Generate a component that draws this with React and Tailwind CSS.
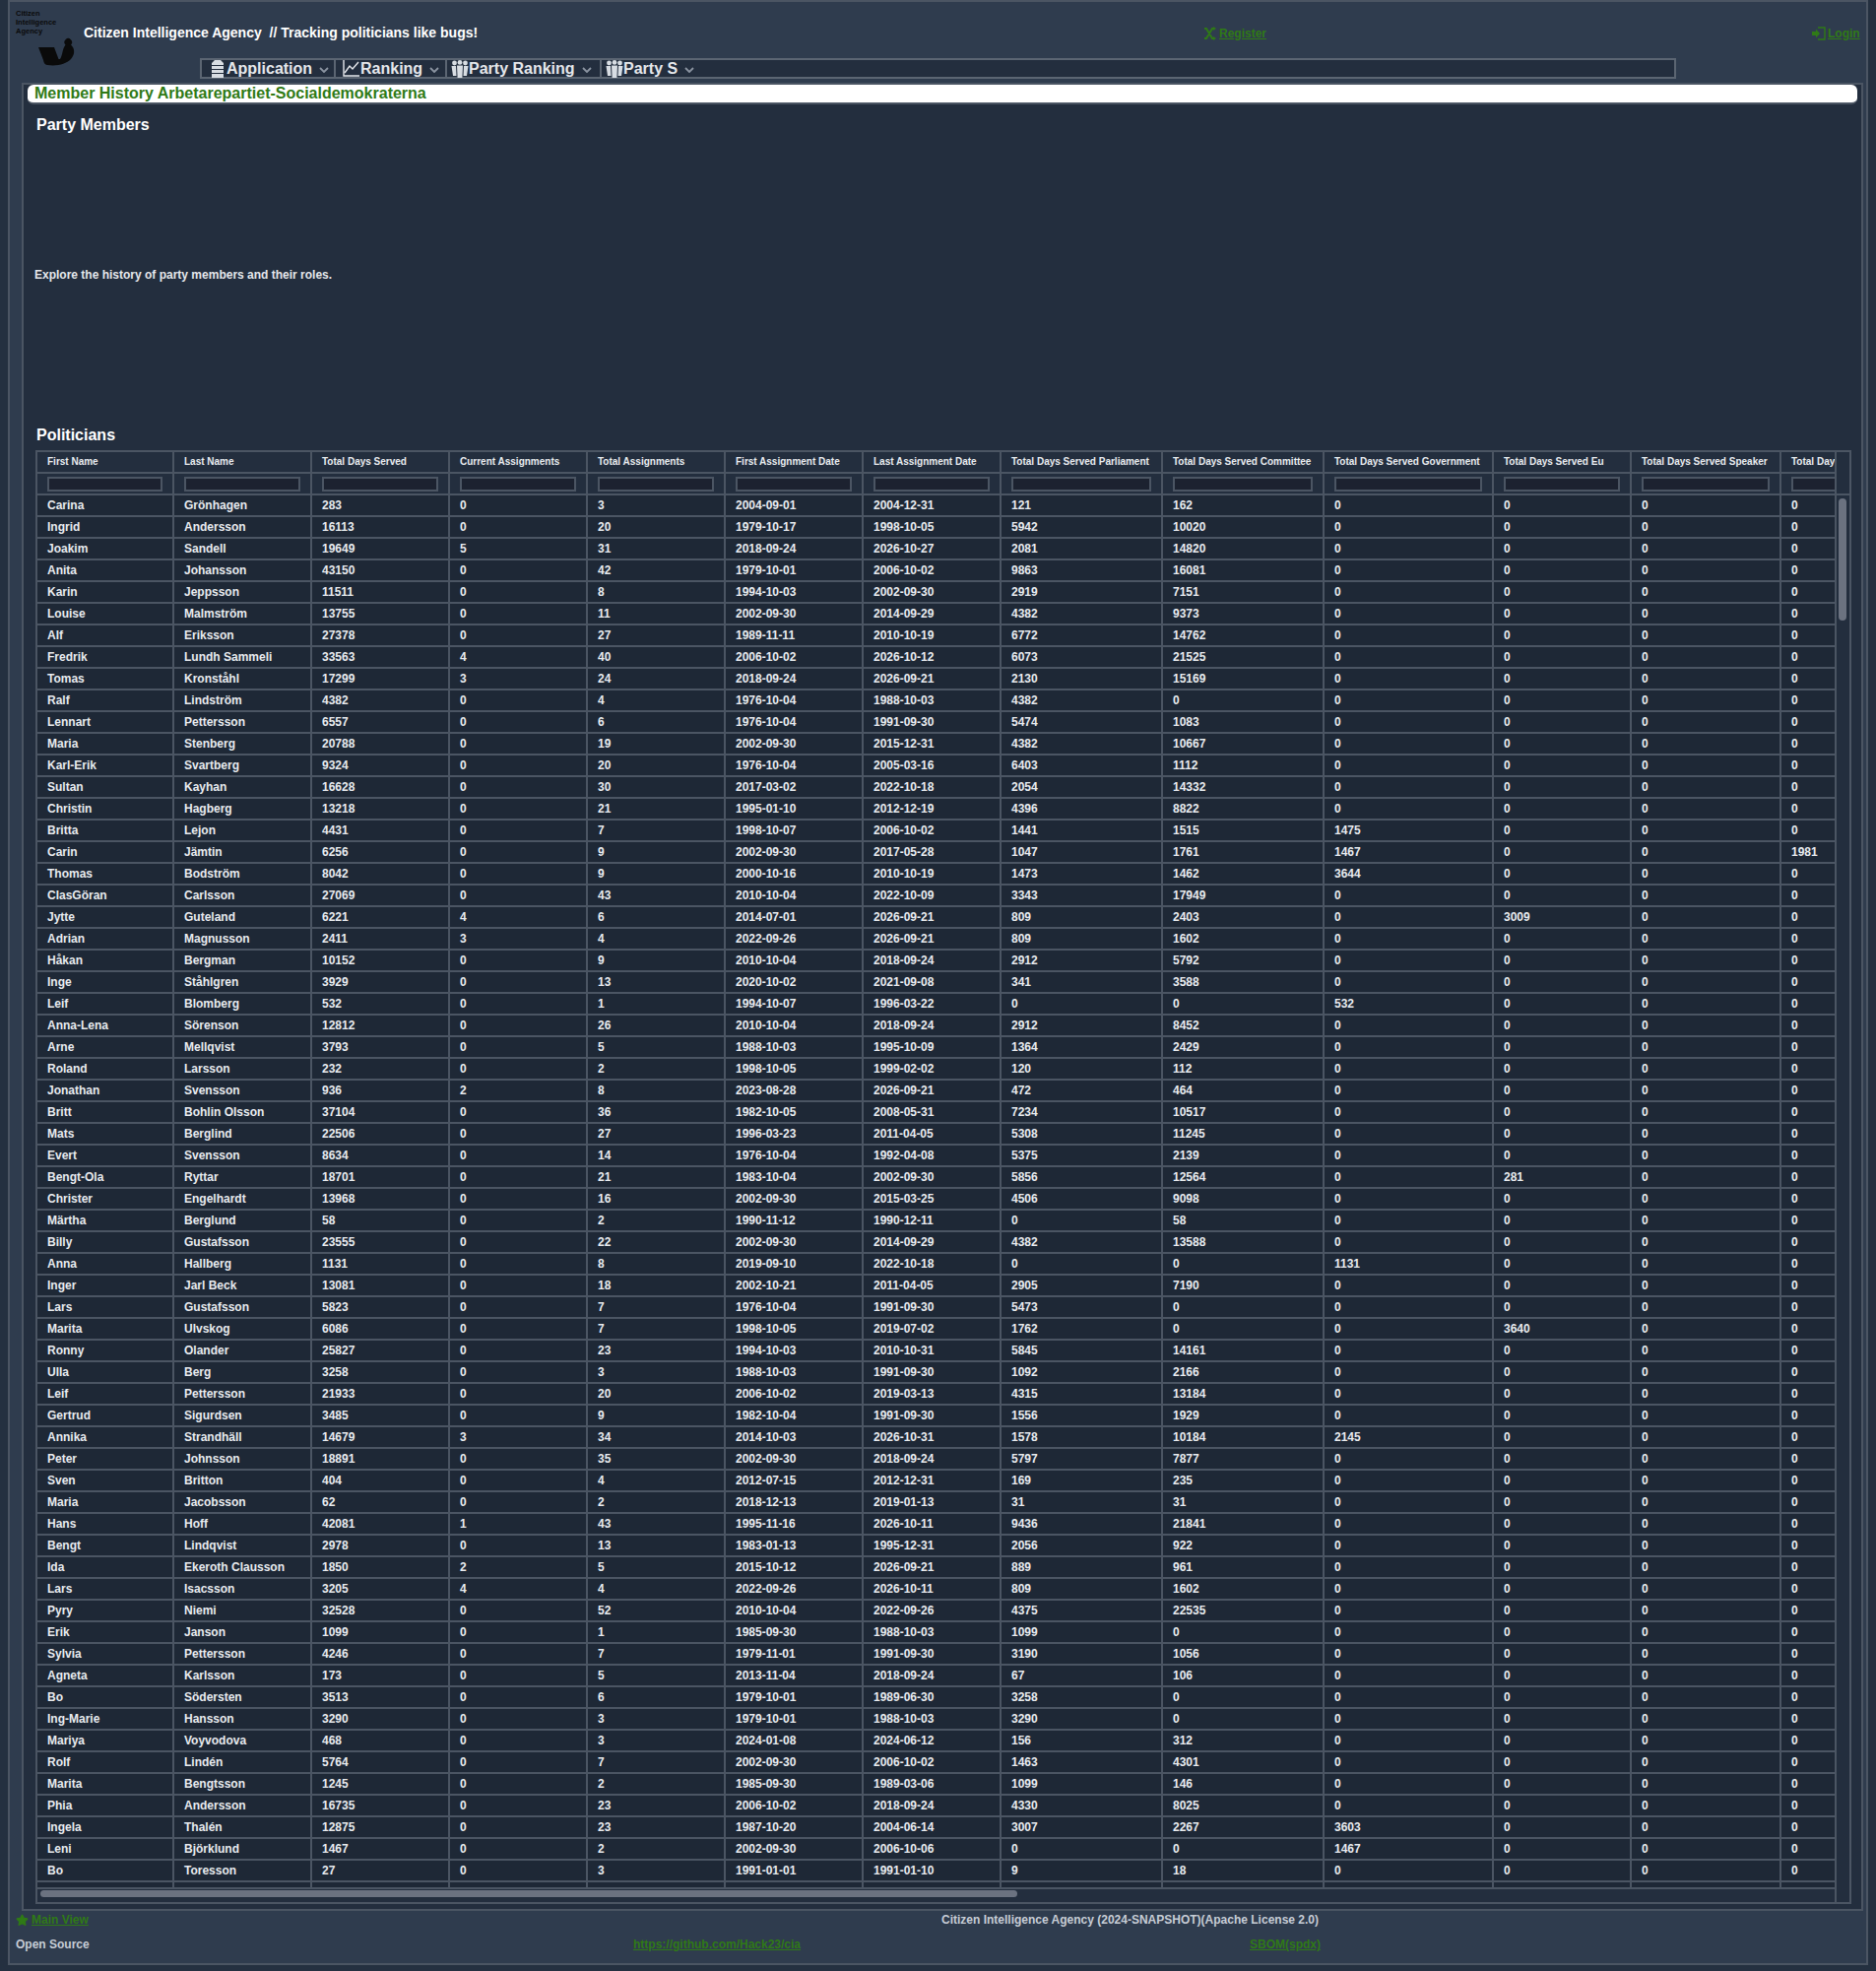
import React from 'react'
import { Star } from 'lucide-react'

const columns = [
  { label: 'First Name', width: 139 },
  { label: 'Last Name', width: 140 },
  { label: 'Total Days Served', width: 140 },
  { label: 'Current Assignments', width: 140 },
  { label: 'Total Assignments', width: 140 },
  { label: 'First Assignment Date', width: 140 },
  { label: 'Last Assignment Date', width: 140 },
  { label: 'Total Days Served Parliament', width: 164 },
  { label: 'Total Days Served Committee', width: 164 },
  { label: 'Total Days Served Government', width: 172 },
  { label: 'Total Days Served Eu', width: 140 },
  { label: 'Total Days Served Speaker', width: 152 },
  { label: 'Total Days Served Riksdag', width: 160 },
]

// first|last|days|current|total|from|to|parliament|committee|government|eu|speaker|extra
const rawRows = `Carina|Grönhagen|283|0|3|2004-09-01|2004-12-31|121|162
Ingrid|Andersson|16113|0|20|1979-10-17|1998-10-05|5942|10020
Joakim|Sandell|19649|5|31|2018-09-24|2026-10-27|2081|14820
Anita|Johansson|43150|0|42|1979-10-01|2006-10-02|9863|16081
Karin|Jeppsson|11511|0|8|1994-10-03|2002-09-30|2919|7151
Louise|Malmström|13755|0|11|2002-09-30|2014-09-29|4382|9373
Alf|Eriksson|27378|0|27|1989-11-11|2010-10-19|6772|14762
Fredrik|Lundh Sammeli|33563|4|40|2006-10-02|2026-10-12|6073|21525
Tomas|Kronståhl|17299|3|24|2018-09-24|2026-09-21|2130|15169
Ralf|Lindström|4382|0|4|1976-10-04|1988-10-03|4382|0
Lennart|Pettersson|6557|0|6|1976-10-04|1991-09-30|5474|1083
Maria|Stenberg|20788|0|19|2002-09-30|2015-12-31|4382|10667
Karl-Erik|Svartberg|9324|0|20|1976-10-04|2005-03-16|6403|1112
Sultan|Kayhan|16628|0|30|2017-03-02|2022-10-18|2054|14332
Christin|Hagberg|13218|0|21|1995-01-10|2012-12-19|4396|8822
Britta|Lejon|4431|0|7|1998-10-07|2006-10-02|1441|1515|1475
Carin|Jämtin|6256|0|9|2002-09-30|2017-05-28|1047|1761|1467|0|0|1981
Thomas|Bodström|8042|0|9|2000-10-16|2010-10-19|1473|1462|3644
ClasGöran|Carlsson|27069|0|43|2010-10-04|2022-10-09|3343|17949
Jytte|Guteland|6221|4|6|2014-07-01|2026-09-21|809|2403|0|3009
Adrian|Magnusson|2411|3|4|2022-09-26|2026-09-21|809|1602
Håkan|Bergman|10152|0|9|2010-10-04|2018-09-24|2912|5792
Inge|Ståhlgren|3929|0|13|2020-10-02|2021-09-08|341|3588
Leif|Blomberg|532|0|1|1994-10-07|1996-03-22|0|0|532
Anna-Lena|Sörenson|12812|0|26|2010-10-04|2018-09-24|2912|8452
Arne|Mellqvist|3793|0|5|1988-10-03|1995-10-09|1364|2429
Roland|Larsson|232|0|2|1998-10-05|1999-02-02|120|112
Jonathan|Svensson|936|2|8|2023-08-28|2026-09-21|472|464
Britt|Bohlin Olsson|37104|0|36|1982-10-05|2008-05-31|7234|10517
Mats|Berglind|22506|0|27|1996-03-23|2011-04-05|5308|11245
Evert|Svensson|8634|0|14|1976-10-04|1992-04-08|5375|2139
Bengt-Ola|Ryttar|18701|0|21|1983-10-04|2002-09-30|5856|12564|0|281
Christer|Engelhardt|13968|0|16|2002-09-30|2015-03-25|4506|9098
Märtha|Berglund|58|0|2|1990-11-12|1990-12-11|0|58
Billy|Gustafsson|23555|0|22|2002-09-30|2014-09-29|4382|13588
Anna|Hallberg|1131|0|8|2019-09-10|2022-10-18|0|0|1131
Inger|Jarl Beck|13081|0|18|2002-10-21|2011-04-05|2905|7190
Lars|Gustafsson|5823|0|7|1976-10-04|1991-09-30|5473|0
Marita|Ulvskog|6086|0|7|1998-10-05|2019-07-02|1762|0|0|3640
Ronny|Olander|25827|0|23|1994-10-03|2010-10-31|5845|14161
Ulla|Berg|3258|0|3|1988-10-03|1991-09-30|1092|2166
Leif|Pettersson|21933|0|20|2006-10-02|2019-03-13|4315|13184
Gertrud|Sigurdsen|3485|0|9|1982-10-04|1991-09-30|1556|1929
Annika|Strandhäll|14679|3|34|2014-10-03|2026-10-31|1578|10184|2145
Peter|Johnsson|18891|0|35|2002-09-30|2018-09-24|5797|7877
Sven|Britton|404|0|4|2012-07-15|2012-12-31|169|235
Maria|Jacobsson|62|0|2|2018-12-13|2019-01-13|31|31
Hans|Hoff|42081|1|43|1995-11-16|2026-10-11|9436|21841
Bengt|Lindqvist|2978|0|13|1983-01-13|1995-12-31|2056|922
Ida|Ekeroth Clausson|1850|2|5|2015-10-12|2026-09-21|889|961
Lars|Isacsson|3205|4|4|2022-09-26|2026-10-11|809|1602
Pyry|Niemi|32528|0|52|2010-10-04|2022-09-26|4375|22535
Erik|Janson|1099|0|1|1985-09-30|1988-10-03|1099|0
Sylvia|Pettersson|4246|0|7|1979-11-01|1991-09-30|3190|1056
Agneta|Karlsson|173|0|5|2013-11-04|2018-09-24|67|106
Bo|Södersten|3513|0|6|1979-10-01|1989-06-30|3258|0
Ing-Marie|Hansson|3290|0|3|1979-10-01|1988-10-03|3290|0
Mariya|Voyvodova|468|0|3|2024-01-08|2024-06-12|156|312
Rolf|Lindén|5764|0|7|2002-09-30|2006-10-02|1463|4301
Marita|Bengtsson|1245|0|2|1985-09-30|1989-03-06|1099|146
Phia|Andersson|16735|0|23|2006-10-02|2018-09-24|4330|8025
Ingela|Thalén|12875|0|23|1987-10-20|2004-06-14|3007|2267|3603
Leni|Björklund|1467|0|2|2002-09-30|2006-10-06|0|0|1467
Bo|Toresson|27|0|3|1991-01-01|1991-01-10|9|18`

const rows = rawRows.split('\n').map((line) => {
  const cells = line.split('|')
  while (cells.length < columns.length) cells.push('0')
  return cells
})

const LogoMark = () => (
  <svg viewBox="0 0 40 32" className="w-[40px] h-[32px] ml-[22px] mt-[1px]" fill="#0a0a0a">
    <path d="M1 11 H17 L21.5 23 L23 23 C26 18 25 13 28.5 8.5 A3.8 3.8 0 1 1 34 8.5 C38 12 38.5 18 34 23 C29 28 20 30.5 10 29 C7.5 28.5 6.5 27 6 24 Z" />
  </svg>
)

const BottleIcon = () => (
  <svg viewBox="0 0 12 18" className="w-[12px] h-[18px] mr-[3px]" fill="#d8dde3">
    <path d="M3 0 H9 L12 3 V5 H0 V3 Z M0 6 H12 V9 H0 Z M0 10 H12 V13 H0 Z M0 14 H12 V18 H0 Z" />
  </svg>
)

const ChartIcon = () => (
  <svg viewBox="0 0 17 17" className="w-[17px] h-[17px] mr-[1px]" fill="none" stroke="#e5e7eb" strokeWidth="1.4">
    <path d="M1 0 V16 H17" />
    <path d="M2 13 L7 6 L10 9 L16 2" />
  </svg>
)

const GroupIcon = () => (
  <svg viewBox="0 0 18 18" className="w-[18px] h-[18px]" fill="#d8dde3">
    <circle cx="3.5" cy="3" r="2.4" />
    <circle cx="9" cy="2.4" r="2.4" />
    <circle cx="14.5" cy="3" r="2.4" />
    <path d="M0.5 6 H5 L5.5 16 H2 Z M6 5.5 H12 L11.4 18 H6.6 Z M13 6 H17.5 L16 16 H12.5 Z" />
  </svg>
)

const RandomIcon = () => (
  <svg viewBox="0 0 13 14" className="w-[13px] h-[14px]" fill="none" stroke="#2f7a16" strokeWidth="2">
    <path d="M1 2 H3 L9 12 H11 M1 12 H3 L9 2 H11" />
    <path d="M10 0 L13 2 L10 4 Z M10 10 L13 12 L10 14 Z" fill="#2f7a16" stroke="none" />
  </svg>
)

const LoginIcon = () => (
  <svg viewBox="0 0 14 14" className="w-[14px] h-[14px]" fill="#2f7a16">
    <path d="M0 5 H4 V2.5 L8 7 L4 11.5 V9 H0 Z" />
    <path d="M6 1 H13 V13 H6" fill="none" stroke="#2f7a16" strokeWidth="1.4" />
  </svg>
)

const Chevron = () => (
  <svg viewBox="0 0 10 6" className="w-[10px] h-[6px] mt-[2px]" fill="none" stroke="#8b94a1" strokeWidth="1.8">
    <path d="M1 1 L5 5 L9 1" />
  </svg>
)

const NavItem = ({ icon, label, className }) => (
  <div className={`flex items-center h-full text-[16px] font-bold text-[#e5e7eb] ${className}`}>
    {icon}
    <span>{label}</span>
    <span className="ml-[7px]"><Chevron /></span>
  </div>
)

const App = () => {
  return (
    <div className="h-[2001px] overflow-hidden bg-[#243040] font-['Liberation_Sans',Arial,sans-serif] px-2">
      <div className="h-[1995px] bg-[#2f3c4e] border-2 border-[#4b5563] flex flex-col">
        {/* Header */}
        <header className="h-[80px] shrink-0 flex">
          <div className="w-[75px] shrink-0 pl-[6px] pt-[7px]">
            <div className="text-[7.5px] leading-[9px] font-bold text-[#0a0a0a] whitespace-nowrap">
              Citizen<br />Intelligence<br />Agency
            </div>
            <LogoMark />
          </div>
          <div className="flex-1 flex flex-col">
            <div className="h-[57px] shrink-0 flex items-start pt-[23px]">
              <div className="w-[1137px] shrink-0 text-[14px] leading-[16px] font-bold text-white whitespace-pre">Citizen Intelligence Agency  // Tracking politicians like bugs!</div>
              <a className="w-[618px] shrink-0 flex items-center gap-[3px] text-[12px] font-bold text-[#2f7a16]">
                <RandomIcon /><span className="underline">Register</span>
              </a>
              <a className="flex items-center gap-[2px] text-[12px] font-bold text-[#2f7a16]">
                <LoginIcon /><span className="underline">Login</span>
              </a>
            </div>
            <nav className="ml-[118px] w-[1499px] h-[21px] flex bg-[#232e3e] border-2 border-[#5b6572] box-border">
              <NavItem icon={<BottleIcon />} label="Application" className="w-[136px] pl-[10px] border-r-2 border-[#5b6572]" />
              <NavItem icon={<ChartIcon />} label="Ranking" className="w-[113px] pl-[7px] border-r-2 border-[#5b6572]" />
              <NavItem icon={<GroupIcon />} label="Party Ranking" className="w-[157px] pl-[4px] border-r-2 border-[#5b6572]" />
              <NavItem icon={<GroupIcon />} label="Party S" className="pl-[4px]" />
            </nav>
          </div>
        </header>

        {/* Main panel */}
        <main className="ml-[12px] mr-[3px] h-[1856px] shrink-0 mt-[2px] bg-[#232e3e] border-2 border-[#4b5563] flex flex-col">
          <div className="h-[20px] shrink-0 ml-[4px] mr-[4px] bg-white rounded-[6px] border-b-2 border-[#4b5563] px-[7px] text-[16px] leading-[18px] font-bold text-[#2f7a16]">
            Member History Arbetarepartiet-Socialdemokraterna
          </div>
          <h2 className="ml-[13px] mt-[12px] h-[18px] text-[16px] leading-[18px] font-bold text-white">Party Members</h2>
          <p className="ml-[11px] mt-[136px] h-[14px] text-[12px] leading-[14px] font-bold text-[#e5e7eb]">Explore the history of party members and their roles.</p>
          <h2 className="ml-[13px] mt-[147px] h-[18px] text-[16px] leading-[18px] font-bold text-white">Politicians</h2>

          {/* Table */}
          <div className="ml-[12px] mt-[6px] w-[1844px] min-h-0 flex-1 mb-[5px] border-2 border-[#4b5563] flex">
            <div className="flex-1 min-w-0 flex flex-col">
              <div className="flex-1 min-h-0 overflow-hidden">
                <table className="table-fixed border-separate border-spacing-0 w-[1931px] text-[#e8ebef]">
                  <colgroup>
                    {columns.map((col) => (
                      <col key={col.label} style={{ width: col.width }} />
                    ))}
                  </colgroup>
                  <thead>
                    <tr className="h-[22px]">
                      {columns.map((col) => (
                        <th key={col.label} className="border-r-2 border-b-2 border-[#4b5563] pl-[10px] pb-[2px] text-left text-[10px] font-bold whitespace-nowrap overflow-hidden">{col.label}</th>
                      ))}
                    </tr>
                    <tr className="h-[22px]">
                      {columns.map((col) => (
                        <th key={col.label} className="border-r-2 border-b-2 border-[#4b5563] px-[10px] align-middle">
                          <input className="block w-full h-[15px] bg-[#1c2230] border-2 border-[#4b5563]" />
                        </th>
                      ))}
                    </tr>
                  </thead>
                  <tbody className="bg-[#1e2836]">
                    {rows.map((row, i) => (
                      <tr key={i} className="h-[22px]">
                        {row.map((cell, j) => (
                          <td key={j} className="border-r-2 border-b-2 border-[#4b5563] pl-[10px] text-[12px] leading-[14px] font-bold whitespace-nowrap overflow-hidden">{cell}</td>
                        ))}
                      </tr>
                    ))}
                    <tr className="h-[22px]">
                      {columns.map((col) => (
                        <td key={col.label} className="border-r-2 border-b-2 border-[#4b5563]"></td>
                      ))}
                    </tr>
                  </tbody>
                </table>
              </div>
              {/* Horizontal scrollbar */}
              <div className="h-[15px] shrink-0 border-t-2 border-[#4b5563] bg-[#232e3e] pl-[3px] pt-[1px]">
                <div className="w-[992px] h-[7px] rounded-[4px] bg-[#6b7280]"></div>
              </div>
            </div>
            {/* Vertical scrollbar */}
            <div className="w-[15px] shrink-0 border-l-2 border-[#4b5563] bg-[#232e3e]">
              <div className="h-[44px] border-b-2 border-[#4b5563]"></div>
              <div className="ml-[2px] mt-[3px] w-[8px] h-[124px] rounded-[4px] bg-[#6b7280]"></div>
            </div>
          </div>
        </main>

        {/* Footer */}
        <footer className="flex-1 text-[12px] font-bold text-[#c7cdd6]">
          <div className="h-[18px] flex items-center">
            <div className="w-[946px] shrink-0 pl-[6px] flex items-center">
              <Star className="w-[13px] h-[13px] text-[#2f7a16] mr-[3px]" fill="#2f7a16" />
              <a className="text-[#2f7a16] underline">Main View</a>
            </div>
            <span>Citizen Intelligence Agency (2024-SNAPSHOT)(Apache License 2.0)</span>
          </div>
          <div className="h-[32px] flex items-center">
            <span className="w-[633px] shrink-0 pl-[6px]">Open Source</span>
            <a className="w-[626px] shrink-0 text-[#2f7a16] underline">https://github.com/Hack23/cia</a>
            <a className="text-[#2f7a16] underline">SBOM(spdx)</a>
          </div>
        </footer>
      </div>
    </div>
  )
}

export default App
